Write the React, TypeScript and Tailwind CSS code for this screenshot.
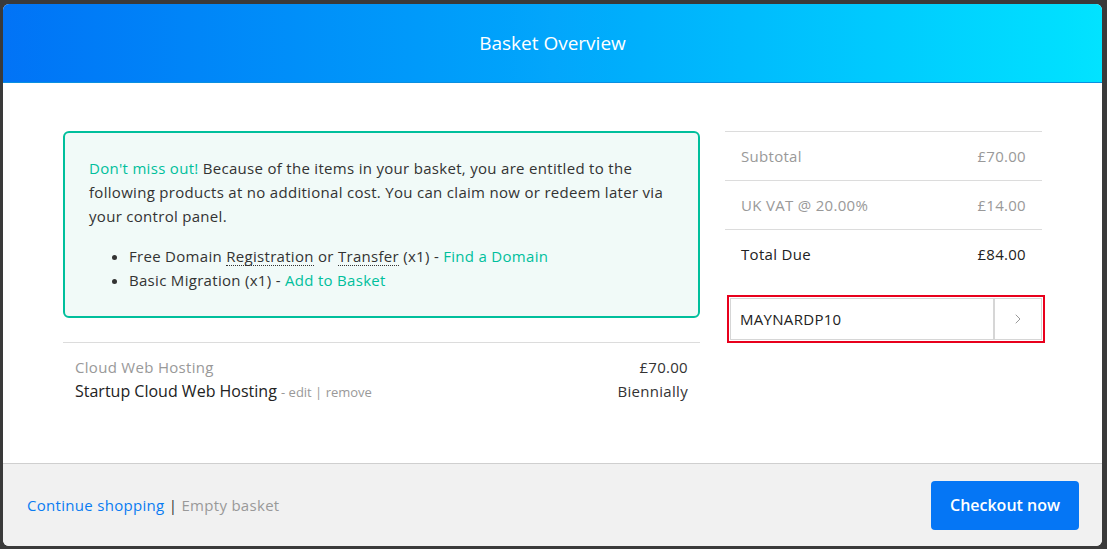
import { ChevronRight } from "lucide-react";

const font = { fontFamily: "'Open Sans', 'Noto Sans', sans-serif" };

function TotalRow({ label, value, strong }: { label: string; value: string; strong?: boolean }) {
  return (
    <div
      className={
        "flex items-center justify-between h-[49px] px-4 border-t border-[#dcdcdc] text-[15px] " +
        (strong ? "text-[#222] font-medium" : "text-[#999]")
      }
    >
      <span>{label}</span>
      <span>{value}</span>
    </div>
  );
}

export default function App() {
  return (
    <div
      className="w-[1107px] h-[549px] bg-[#3a3a3a] pt-[4px] pl-[3px] pr-[5px] pb-[3px] overflow-hidden"
      style={font}
    >
      <div className="h-full flex flex-col rounded-[6px] overflow-hidden bg-white">
        {/* Header */}
        <div className="h-[79px] shrink-0 flex items-center justify-center bg-gradient-to-r from-[#0273f6] via-[#03a6fb] to-[#02e3ff] border-b border-[#0a8fe0] text-white text-[19px]">
          Basket Overview
        </div>

        {/* Body */}
        <div className="flex-1 flex gap-[25px] px-[60px] pt-[48px] tracking-[0.3px]">
          <div className="w-[637px]">
            {/* Promo box */}
            <div className="h-[187px] rounded-[6px] border-2 border-[#00bf9c] bg-[#f1faf8] px-[24px] pt-[23px] text-[15px] leading-[24px] text-[#333]">
              <p>
                <span className="text-[#00bf9c]">Don't miss out!</span> Because of the items in your basket, you are
                entitled to the following products at no additional cost. You can claim now or redeem later via your
                control panel.
              </p>
              <ul className="mt-[16px] pl-[40px] list-disc">
                <li>
                  Free Domain{" "}
                  <span className="border-b border-dotted border-[#333] leading-[18px] inline-block">Registration</span>{" "}
                  or <span className="border-b border-dotted border-[#333] leading-[18px] inline-block">Transfer</span>{" "}
                  (x1) - <span className="text-[#00bf9c]">Find a Domain</span>
                </li>
                <li>
                  Basic Migration (x1) - <span className="text-[#00bf9c]">Add to Basket</span>
                </li>
              </ul>
            </div>

            {/* Basket item */}
            <div className="mt-[24px] border-t border-[#dcdcdc] px-[12px] pt-[12px] flex justify-between leading-[24px]">
              <div>
                <div className="text-[15px] text-[#999]">Cloud Web Hosting</div>
                <div className="text-[16px] text-[#222] tracking-normal">
                  Startup Cloud Web Hosting{" "}
                  <span className="text-[13px] text-[#999]">- edit | remove</span>
                </div>
              </div>
              <div className="text-right text-[15px] text-[#333]">
                <div>£70.00</div>
                <div>Biennially</div>
              </div>
            </div>
          </div>

          {/* Totals */}
          <div className="w-[317px]">
            <TotalRow label="Subtotal" value="£70.00" />
            <TotalRow label="UK VAT @ 20.00%" value="£14.00" />
            <TotalRow label="Total Due" value="£84.00" strong />

            <div className="mt-[17px] ml-[2px] w-[318px] h-[48px] border-2 border-[#e8001c] p-[1px]">
              <div className="h-full flex border border-[#d6d6d6]">
                <div className="flex-1 flex items-center pl-[9px] text-[15px] text-[#222]">MAYNARDP10</div>
                <div className="w-[48px] flex items-center justify-center border-l-2 border-[#d6d6d6] text-[#999]">
                  <ChevronRight size={16} strokeWidth={1.5} />
                </div>
              </div>
            </div>
          </div>
        </div>

        {/* Footer */}
        <div className="h-[83px] shrink-0 flex items-center justify-between bg-[#f1f1f1] border-t border-[#cfcfcf] pl-[24px] pr-[23px] tracking-[0.3px]">
          <div className="text-[15px]">
            <span className="text-[#0a7cf2]">Continue shopping</span>{" "}
            <span className="text-[#333]">|</span> <span className="text-[#999]">Empty basket</span>
          </div>
          <button className="w-[148px] h-[49px] rounded-[4px] bg-[#0576f5] text-white text-[16px] font-semibold tracking-normal">
            Checkout now
          </button>
        </div>
      </div>
    </div>
  );
}
